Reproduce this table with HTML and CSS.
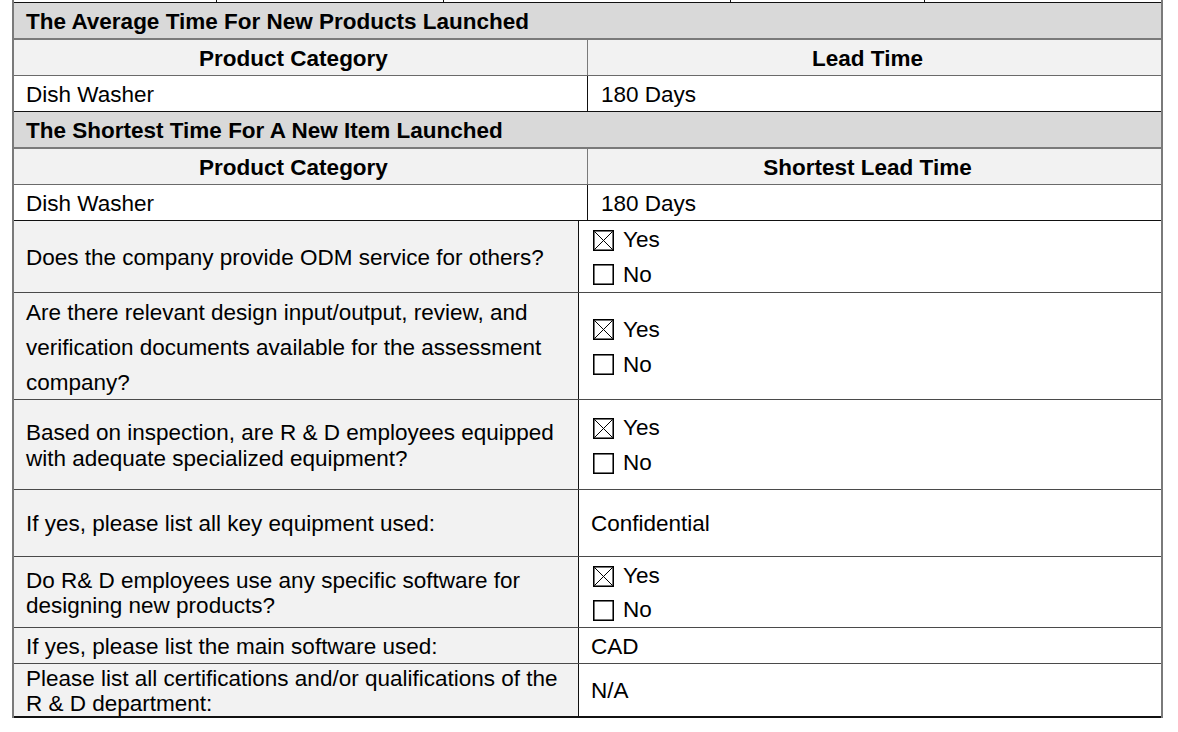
FILE: index.html
```html
<!DOCTYPE html>
<html>
<head>
<meta charset="utf-8">
<link rel="stylesheet" href="styles.css">
</head>
<body>
<div class="sheet">
  <div class="strip"><span></span><span></span><span></span><span></span><span></span></div>

  <div class="row section"><div class="cell">The Average Time For New Products Launched</div></div>
  <div class="row head">
    <div class="cell wide center">Product Category</div>
    <div class="cell fill center">Lead Time</div>
  </div>
  <div class="row data">
    <div class="cell wide">Dish Washer</div>
    <div class="cell fill">180 Days</div>
  </div>

  <div class="row section"><div class="cell">The Shortest Time For A New Item Launched</div></div>
  <div class="row head">
    <div class="cell wide center">Product Category</div>
    <div class="cell fill center">Shortest Lead Time</div>
  </div>
  <div class="row data">
    <div class="cell wide">Dish Washer</div>
    <div class="cell fill">180 Days</div>
  </div>

  <div class="row q h-odm">
    <div class="cell ask">Does the company provide ODM service for others?</div>
    <div class="cell fill answer">
      <div class="opt"><svg class="box" viewBox="0 0 21 21"><rect x="0.75" y="0.75" width="19.5" height="19.5"/><path d="M1.5 1.5L19.5 19.5M19.5 1.5L1.5 19.5"/></svg>Yes</div>
      <div class="opt"><svg class="box" viewBox="0 0 21 21"><rect x="0.75" y="0.75" width="19.5" height="19.5"/></svg>No</div>
    </div>
  </div>

  <div class="row q h-design">
    <div class="cell ask loose">Are there relevant design input/output, review, and<br>verification documents available for the assessment<br>company?</div>
    <div class="cell fill answer">
      <div class="opt"><svg class="box" viewBox="0 0 21 21"><rect x="0.75" y="0.75" width="19.5" height="19.5"/><path d="M1.5 1.5L19.5 19.5M19.5 1.5L1.5 19.5"/></svg>Yes</div>
      <div class="opt"><svg class="box" viewBox="0 0 21 21"><rect x="0.75" y="0.75" width="19.5" height="19.5"/></svg>No</div>
    </div>
  </div>

  <div class="row q h-based">
    <div class="cell ask">Based on inspection, are R &amp; D employees equipped<br>with adequate specialized equipment?</div>
    <div class="cell fill answer">
      <div class="opt"><svg class="box" viewBox="0 0 21 21"><rect x="0.75" y="0.75" width="19.5" height="19.5"/><path d="M1.5 1.5L19.5 19.5M19.5 1.5L1.5 19.5"/></svg>Yes</div>
      <div class="opt"><svg class="box" viewBox="0 0 21 21"><rect x="0.75" y="0.75" width="19.5" height="19.5"/></svg>No</div>
    </div>
  </div>

  <div class="row q h-key">
    <div class="cell ask">If yes, please list all key equipment used:</div>
    <div class="cell fill">Confidential</div>
  </div>

  <div class="row q h-sw">
    <div class="cell ask">Do R&amp; D employees use any specific software for<br>designing new products?</div>
    <div class="cell fill answer">
      <div class="opt"><svg class="box" viewBox="0 0 21 21"><rect x="0.75" y="0.75" width="19.5" height="19.5"/><path d="M1.5 1.5L19.5 19.5M19.5 1.5L1.5 19.5"/></svg>Yes</div>
      <div class="opt"><svg class="box" viewBox="0 0 21 21"><rect x="0.75" y="0.75" width="19.5" height="19.5"/></svg>No</div>
    </div>
  </div>

  <div class="row q h-main">
    <div class="cell ask">If yes, please list the main software used:</div>
    <div class="cell fill">CAD</div>
  </div>

  <div class="row q h-cert last">
    <div class="cell ask">Please list all certifications and/or qualifications of the<br>R &amp; D department:</div>
    <div class="cell fill">N/A</div>
  </div>
</div>
</body>
</html>
```

FILE: styles.css
```css
html, body {
  margin: 0;
  padding: 0;
  background: #ffffff;
}

body {
  font-family: "Liberation Sans", Arial, sans-serif;
  font-size: 22.5px;
  color: #000000;
}

.sheet {
  margin-left: 12px;
  width: 1151px;
  box-sizing: border-box;
  border-left: 2px solid #7a7a7a;
  border-right: 2px solid #7a7a7a;
}

.strip {
  display: grid;
  grid-template-columns: 203px 227px 287px 194px 1fr;
  height: 3px;
  box-sizing: border-box;
  border-bottom: 1px solid #111;
}

.strip span {
  border-right: 1px solid #111;
}

.strip span:last-child {
  border-right: none;
}

.row {
  display: flex;
  box-sizing: border-box;
  border-bottom: 1px solid #111;
}

.cell {
  display: flex;
  align-items: center;
  box-sizing: border-box;
  padding-left: 12px;
  padding-top: 2px;
  white-space: nowrap;
}

.section {
  height: 37px;
  background: #d9d9d9;
  border-bottom: 2px solid #7a7a7a;
  font-weight: bold;
}

.head {
  height: 36px;
  background: #f2f2f2;
  font-weight: bold;
  border-bottom: 1px solid #6a6a6a;
}

.head .wide {
  border-right-color: #7a7a7a;
}

.data {
  height: 36px;
  background: #ffffff;
}

.wide {
  width: 574px;
  border-right: 1px solid #111;
}

.fill {
  flex: 1;
}

.center {
  justify-content: center;
  padding-left: 0;
  padding-right: 14px;
}

.data .fill {
  padding-left: 13px;
}

.q .ask {
  width: 565px;
  background: #f2f2f2;
  border-right: 1px solid #111;
  line-height: 25.5px;
}

.q {
  border-bottom: 1px solid #4a4a4a;
}

.q .fill {
  background: #ffffff;
  padding-left: 12px;
}

.ask.loose {
  line-height: 35px;
}

.answer {
  flex-direction: column;
  align-items: flex-start;
  justify-content: center;
}

.opt {
  display: flex;
  align-items: center;
  height: 35px;
  padding-left: 2px;
}

.box {
  width: 21px;
  height: 21px;
  margin-right: 9px;
  fill: none;
  stroke: #000;
}

.box rect {
  stroke-width: 1.6;
}

.box path {
  stroke-width: 1;
}

.h-odm { height: 72px; }
.h-design { height: 107px; }
.h-based { height: 90px; }
.h-key { height: 67px; }
.h-sw { height: 71px; }
.h-main { height: 36px; }
.h-cert { height: 54px; }

.last {
  border-bottom: 2px solid #111;
}
```
